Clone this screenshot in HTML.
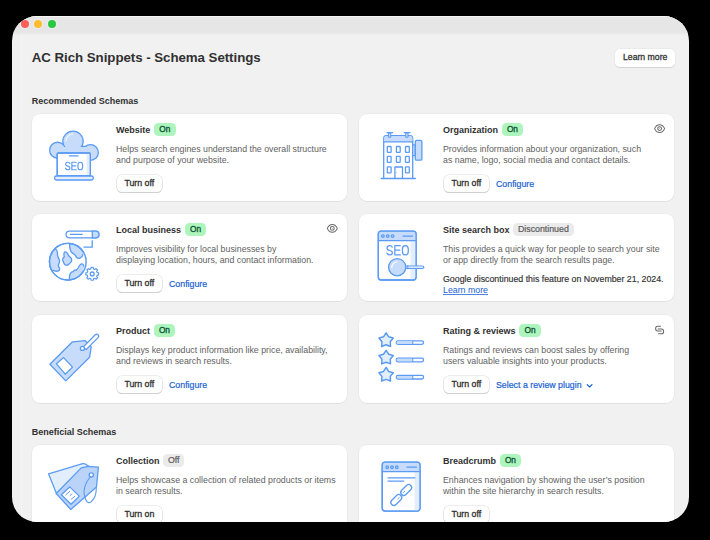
<!DOCTYPE html>
<html><head><meta charset="utf-8">
<style>
*{margin:0;padding:0;box-sizing:border-box}
html,body{width:710px;height:540px;background:#000;overflow:hidden;font-family:"Liberation Sans",sans-serif}
.win{position:absolute;left:12.4px;top:15.8px;width:676.6px;height:506.4px;border-radius:25px;background:#f1f1f1;overflow:hidden}
.bar{position:absolute;left:0;top:0;width:100%;height:19.4px;background:linear-gradient(#e6e6e6 0,#e6e6e6 16.4px,#f1f1f1 19.4px);box-shadow:inset 0 .9px 0 rgba(255,255,255,.65)}
.dot{position:absolute;top:4.4px;width:8.2px;height:8.2px;border-radius:50%;box-shadow:0 0 0 1.2px rgba(245,248,255,.35)}
.abs{position:absolute}
.pg{position:absolute;left:-12.4px;top:-15.8px;width:710px;height:540px}
h1{position:absolute;left:31.8px;top:50.3px;font-size:13.3px;font-weight:bold;color:#303030;letter-spacing:-0.05px;white-space:nowrap}
.sec{position:absolute;font-size:9px;font-weight:bold;color:#303030;white-space:nowrap}
.lm{position:absolute;left:615px;top:49px;width:60px;height:17.5px;background:#fff;border-radius:5px;box-shadow:0 0 0 .5px #e3e3e3,0 1px .5px #c4c4c4;font-size:8.7px;font-weight:normal;-webkit-text-stroke:.3px #333;color:#333;text-align:center;line-height:17.8px;padding-left:.4px}
.card{position:absolute;width:315px;height:86.9px;background:#fff;border-radius:8px;box-shadow:0 0 0 .6px rgba(0,0,0,.05),0 .7px .3px rgba(0,0,0,.06)}
.t{position:absolute;left:84px;top:10.5px;font-size:9px;font-weight:bold;color:#303030;white-space:nowrap}
.badge{display:inline-block;vertical-align:top;margin-left:3.5px;margin-top:-1.4px;height:12.9px;padding:0 5.4px;border-radius:4.5px;background:#adf5bd;color:#0c5132;font-weight:normal;font-size:8.3px;line-height:13.3px;-webkit-text-stroke:.3px #0c5132}
.badge.off{background:#ebebeb;color:#5a5a5a;font-size:8.8px;-webkit-text-stroke:.2px #5a5a5a;padding:0 4.9px;margin-top:-1.9px;line-height:13.1px}
.d{position:absolute;left:84px;top:30.2px;font-size:8.8px;line-height:10.9px;color:#616161;white-space:nowrap}
.btn{position:absolute;left:84.6px;top:60.8px;height:17.4px;padding:0 7.8px;background:#fff;border-radius:5px;box-shadow:0 0 0 .5px #dcdcdc,0 .8px 0 .3px #c6c6c6;font-size:8.8px;font-weight:normal;-webkit-text-stroke:.3px #303030;color:#303030;line-height:17.4px;white-space:nowrap}
.lnk{position:absolute;top:61px;line-height:18.6px;font-size:8.8px;color:#1a5fd2;-webkit-text-stroke:.2px #1a5fd2;white-space:nowrap}
.ov{position:absolute;left:0;top:0}
</style></head><body>
<div class="win">
  <div class="bar"></div>
  <div class="dot" style="left:8.6px;background:#fe5f57"></div>
  <div class="dot" style="left:21.9px;background:#febc2e"></div>
  <div class="dot" style="left:35.2px;background:#28c840"></div>
<div class="pg">
<div class="abs" style="left:20.6px;top:35px;width:.9px;height:487px;background:#f4f4f8"></div>
<h1>AC Rich Snippets - Schema Settings</h1>
<div class="lm">Learn more</div>
<div class="sec" style="left:31.8px;top:96px">Recommended Schemas</div>

<!-- Row 1 -->
<div class="card" style="left:32px;top:114px">
  <div class="t">Website<span class="badge">On</span></div>
  <div class="d">Helps search engines understand the overall structure<br>and purpose of your website.</div>
  <div class="btn">Turn off</div>
</div>
<div class="card" style="left:359px;top:114px">
  <div class="t">Organization<span class="badge">On</span></div>
  <div class="d">Provides information about your organization, such<br>as name, logo, social media and contact details.</div>
  <div class="btn">Turn off</div>
  <div class="lnk" style="left:137px">Configure</div>
</div>

<!-- Row 2 -->
<div class="card" style="left:32px;top:214px">
  <div class="t">Local business<span class="badge">On</span></div>
  <div class="d">Improves visibility for local businesses by<br>displaying location, hours, and contact information.</div>
  <div class="btn">Turn off</div>
  <div class="lnk" style="left:137px">Configure</div>
</div>
<div class="card" style="left:359px;top:214px">
  <div class="t">Site search box<span class="badge off">Discontinued</span></div>
  <div class="d">This provides a quick way for people to search your site<br>or app directly from the search results page.</div>
  <div class="d" style="top:59.9px;line-height:10.8px;color:#303030;-webkit-text-stroke:.15px #303030">Google discontinued this feature on November 21, 2024.<br><span style="color:#1a5fd2;-webkit-text-stroke:0;text-decoration:underline;text-decoration-thickness:.6px;text-underline-offset:.6px;text-decoration-color:#4d86df">Learn more</span></div>
</div>

<!-- Row 3 -->
<div class="card" style="left:32px;top:315.2px;height:87.6px">
  <div class="t">Product<span class="badge">On</span></div>
  <div class="d">Displays key product information like price, availability,<br>and reviews in search results.</div>
  <div class="btn">Turn off</div>
  <div class="lnk" style="left:137px">Configure</div>
</div>
<div class="card" style="left:359px;top:315.2px;height:87.6px">
  <div class="t">Rating &amp; reviews<span class="badge">On</span></div>
  <div class="d">Ratings and reviews can boost sales by offering<br>users valuable insights into your products.</div>
  <div class="btn">Turn off</div>
  <div class="lnk" style="left:137px">Select a review plugin</div>
</div>

<div class="sec" style="left:31.8px;top:427px">Beneficial Schemas</div>

<!-- Row 4 -->
<div class="card" style="left:32px;top:445px">
  <div class="t">Collection<span class="badge off">Off</span></div>
  <div class="d">Helps showcase a collection of related products or items<br>in search results.</div>
  <div class="btn">Turn on</div>
</div>
<div class="card" style="left:359px;top:445px">
  <div class="t">Breadcrumb<span class="badge">On</span></div>
  <div class="d">Enhances navigation by showing the user’s position<br>within the site hierarchy in search results.</div>
  <div class="btn">Turn off</div>
</div>

<svg class="ov" width="710" height="540" viewBox="0 0 710 540">
<g fill="none" stroke="#5b9bf4" stroke-width="1.3" stroke-linejoin="round" stroke-linecap="round">
 <!-- Website cloud SEO -->
 <g>
  <g stroke-width="2.6">
   <circle cx="57.6" cy="150.2" r="7.3"/>
   <circle cx="73" cy="141.3" r="9.5"/>
   <circle cx="90.5" cy="152.5" r="7.2"/>
   <rect x="57.6" y="147" width="32.9" height="11"/>
  </g>
  <g fill="#c6dcfa" stroke="none">
   <circle cx="57.6" cy="150.2" r="7.3"/>
   <circle cx="73" cy="141.3" r="9.5"/>
   <circle cx="90.5" cy="152.5" r="7.2"/>
   <rect x="57.6" y="147" width="32.9" height="11"/>
  </g>
  <path d="M65.9 140.8 A7.2 7.2 0 0 1 72.6 134.2" stroke="#eef5fe" stroke-width="1.2"/>
  <rect x="57.2" y="153" width="33.1" height="23" rx="1.2" fill="#fff"/>
  <rect x="86.6" y="153.7" width="3" height="21.6" fill="#e3eefd" stroke="none"/>
  <rect x="57.2" y="153" width="33.1" height="23" rx="1.2"/>
  <line x1="69.4" y1="155.8" x2="78.1" y2="155.8"/>
  <path d="M69.81 163.40 C69.35 162.35 68.56 162.20 67.72 162.20 C66.42 162.20 65.63 163.10 65.63 164.22 C65.63 165.65 66.70 165.88 67.72 166.10 C68.93 166.36 69.90 166.70 69.90 167.90 C69.90 169.10 69.02 169.70 67.72 169.70 C66.70 169.70 65.86 169.17 65.49 168.20 M76.18 162.20 L71.86 162.20 L71.86 169.70 L76.28 169.70 M71.86 165.80 L75.86 165.80 M80.28 162.20 C81.86 162.20 82.60 163.25 82.60 164.75 L82.60 167.15 C82.60 168.65 81.86 169.70 80.28 169.70 C78.70 169.70 77.96 168.65 77.96 167.15 L77.96 164.75 C77.96 163.25 78.70 162.20 80.28 162.20 Z" stroke-width="1.15"/>
  <rect x="54.6" y="176" width="38.7" height="4" rx="1.8" fill="#e3eefd"/>
 </g>
 <!-- Organization building -->
 <g>
  <path d="M383.7 178.5 L383.7 138.5 Q383.7 135.7 386.5 135.7 L409.9 135.7 Q412.7 135.7 412.7 138.5 L412.7 178.5" fill="#fff"/>
  <path d="M383.9 141.8 L383.9 138.5 Q383.9 135.9 386.5 135.9 L409.9 135.9 Q412.5 135.9 412.5 138.5 L412.5 141.8 Z" fill="#c6dcfa" stroke="none"/>
  <line x1="383.7" y1="141.8" x2="412.7" y2="141.8"/>
  <line x1="381.1" y1="178.5" x2="415.4" y2="178.5"/>
  <path d="M386.9 132.7 L392.7 132.7 M404.2 132.7 L410 132.7"/>
  <rect x="388.8" y="133.2" width="2" height="4" fill="#c6dcfa" stroke-width="1"/>
  <rect x="406.1" y="133.2" width="2" height="4" fill="#c6dcfa" stroke-width="1"/>
  <rect x="387.3" y="146.5" width="3.8" height="5.9" rx=".6"/>
  <rect x="396.4" y="146.5" width="3.8" height="5.9" rx=".6"/>
  <rect x="405.5" y="146.5" width="3.8" height="5.9" rx=".6"/>
  <rect x="387.3" y="156.3" width="3.8" height="6.1" rx=".6"/>
  <rect x="396.4" y="156.3" width="3.8" height="6.1" rx=".6"/>
  <rect x="405.5" y="156.3" width="3.8" height="6.1" rx=".6"/>
  <rect x="387.3" y="166.9" width="3.8" height="5.9" rx=".6"/>
  <rect x="405.5" y="166.9" width="3.8" height="5.9" rx=".6"/>
  <path d="M394.9 178.5 L394.9 167 L402.5 167 L402.5 178.5"/>
  <circle cx="396.6" cy="172.5" r=".4" fill="#5b9bf4" stroke="none"/>
  <rect x="412.7" y="144.9" width="2.5" height="10.7" fill="#e3eefd"/>
  <rect x="415.3" y="140.4" width="6.6" height="19.8" rx="1.3" fill="#c6dcfa"/>
 </g>
 <!-- Local business globe -->
 <g>
  <circle cx="67.8" cy="261.7" r="18.3" fill="#fff"/>
  <path d="M55 248.5 Q57.6 250.2 57.5 253.2 Q57.3 256.2 58.8 258.6 Q60.3 261.2 58.9 263.6 Q57.8 265.8 59.3 267.8 Q60.4 270.3 57.8 271.1 Q55.6 271.6 51.6 270.2 A18.3 18.3 0 0 1 55 248.5 Z" fill="#c6dcfa"/>
  <path d="M64.5 252 Q66.8 251.3 67.8 254 Q68.4 256.3 70.4 257.3 Q72.4 259.3 71.3 261.6 Q69.8 263.6 68.4 264.6 Q66.4 265.8 64.6 264.4 Q63.4 262.2 62.6 260.2 Q62.5 257.7 64.3 256.8 Q63.4 254 64.5 252 Z" fill="#c6dcfa"/>
  <path d="M69.5 243.5 A18.3 18.3 0 0 1 83.6 252.5 Q82.8 256.5 80.6 257.8 Q78.2 259 76.6 257.6 Q75.6 255.2 73.6 253.8 Q71.1 252.6 70.4 250.2 Q69.5 247.2 69.5 243.5 Z" fill="#c6dcfa"/>
  <path d="M84.8 268 A18.3 18.3 0 0 1 69.4 279.9 Q69.2 276.2 70.2 273.6 Q71.8 271.3 73.3 271.6 Q74.6 269.2 76.2 270.3 Q78.6 268.2 79.4 265.6 Q81.6 263 83 264.3 Q84.2 265.8 84.8 268 Z" fill="#c6dcfa"/>
  <path d="M83.6 253 A18.3 18.3 0 0 1 83.8 270.2" stroke="#e3eefd" stroke-width="2.2"/>
  <circle cx="67.8" cy="261.7" r="18.3"/>
  <rect x="66.1" y="231.1" width="32.8" height="6.7" rx="3.35" fill="#fff"/>
  <path d="M92.3 231.1 L95.6 231.1 A3.35 3.35 0 0 1 95.6 237.8 L92.3 237.8 Z" fill="#c6dcfa"/>
  <line x1="70.3" y1="234.4" x2="82.2" y2="234.4"/>
  <path d="M92.2 240.7 L92.2 247.2 L84 247.2"/>
  <g transform="translate(92.2 273.9)">
   <path d="M-1.1 -6 L1.1 -6 L1.5 -4.4 L2.9 -3.7 L4.3 -4.7 L5.8 -3.2 L4.8 -1.8 L5.4 -0.4 L6.9 0 L6.9 2.1 L5.4 2.5 L4.8 3.9 L5.8 5.3 L4.3 6.8 L2.9 5.8 L1.5 6.4 L1.1 8 L-1.1 8 L-1.5 6.4 L-2.9 5.8 L-4.3 6.8 L-5.8 5.3 L-4.8 3.9 L-5.4 2.5 L-6.9 2.1 L-6.9 0 L-5.4 -0.4 L-4.8 -1.8 L-5.8 -3.2 L-4.3 -4.7 L-2.9 -3.7 L-1.5 -4.4 Z" transform="translate(0 -1) scale(.92)" fill="#fff"/>
   <circle cx="0" cy="0" r="1.9"/>
  </g>
 </g>
 <!-- Site search box -->
 <g>
  <rect x="378.3" y="231.1" width="37.8" height="48.9" rx="3" fill="#fff"/>
  <path d="M378.6 240.6 L378.6 234 Q378.6 231.4 381.2 231.4 L413.2 231.4 Q415.8 231.4 415.8 234 L415.8 240.6 Z" fill="#c6dcfa" stroke="none"/>
  <rect x="410.5" y="241" width="5.2" height="38.6" fill="#e3eefd" stroke="none"/>
  <rect x="378.3" y="231.1" width="37.8" height="48.9" rx="3"/>
  <line x1="378.3" y1="240.6" x2="416.1" y2="240.6"/>
  <circle cx="382.9" cy="236.1" r="1.3"/>
  <circle cx="387.7" cy="236.1" r="1.3"/>
  <circle cx="392.6" cy="236.1" r="1.3"/>
  <line x1="403" y1="236.1" x2="412.5" y2="236.1"/>
  <path d="M392.26 247.14 C391.68 245.84 390.70 245.65 389.65 245.65 C388.03 245.65 387.04 246.77 387.04 248.16 C387.04 249.93 388.38 250.21 389.65 250.49 C391.16 250.81 392.38 251.23 392.38 252.72 C392.38 254.21 391.28 254.95 389.65 254.95 C388.38 254.95 387.33 254.30 386.87 253.09 M400.23 245.65 L394.83 245.65 L394.83 254.95 L400.34 254.95 M394.83 250.11 L399.82 250.11 M405.35 245.65 C407.32 245.65 408.25 246.95 408.25 248.81 L408.25 251.79 C408.25 253.65 407.32 254.95 405.35 254.95 C403.37 254.95 402.44 253.65 402.44 251.79 L402.44 248.81 C402.44 246.95 403.37 245.65 405.35 245.65 Z" stroke-width="1.25"/>
  <line x1="406.5" y1="267.2" x2="422.5" y2="267.2" stroke-width="3.6"/>
  <line x1="406.5" y1="267.2" x2="422.5" y2="267.2" stroke="#fff" stroke-width="1.2"/>
  <line x1="407.8" y1="265.5" x2="407.8" y2="268.9" stroke-width="1"/>
  <circle cx="397.2" cy="267.2" r="8.6" fill="#c6dcfa"/>
  <path d="M391.8 268 A5.6 5.6 0 0 1 397 261.8" stroke="#fff" stroke-width="1.1"/>
 </g>
 <!-- Product tag -->
 <g>
  <path d="M49.9 364.3 L65.8 380.9 L89.6 357.2 L91.2 346.8 L85.3 340.7 L72.5 341.8 Z" fill="#c6dcfa"/>
  <path d="M56.4 363.8 L63.6 357.6 L72.5 367.1 L65.3 374.2 Z" fill="#fff"/>
  <path d="M83.3 346.9 L95.3 334.8 A1.9 1.9 0 0 1 98.1 337.6 L86.1 349.6 Z" fill="#fff"/>
  <circle cx="82.4" cy="348.4" r="2" fill="#fff"/>
 </g>
 <!-- Rating stars -->
 <g>
  <g id="st">
   <path d="M386.10 332.90 L388.69 336.84 L393.23 338.08 L390.28 341.76 L390.51 346.47 L386.10 344.80 L381.69 346.47 L381.92 341.76 L378.97 338.08 L383.51 336.84 Z" fill="#e3eefd" stroke-width="1.5"/>
   <rect x="396.2" y="340.8" width="27.4" height="3.6" rx="1.8" fill="#fff"/>
   <path d="M397.9 341.3 L412.6 341.3 L412.6 343.9 L397.9 343.9 A1.3 1.3 0 0 1 397.9 341.3 Z" fill="#c6dcfa" stroke="none"/>
   <line x1="412.8" y1="341" x2="412.8" y2="344.2" stroke-width="1"/>
  </g>
  <use href="#st" transform="translate(0 17.4)"/>
  <use href="#st" transform="translate(0 34.6)"/>
 </g>
 <!-- Collection tags -->
 <g>
  <path d="M48.6 473.9 L82.7 463.7 Q84.4 463.3 85.7 464.2 L89.8 467 L56.5 493.5 Z" fill="#e3eefd"/>
  <path d="M56.2 493.5 L70.8 509.5 L96.5 487 L98.4 467.2 L88.2 466.3 L81.2 467.9 Z" fill="#b9d3f9"/>
  <path d="M61.3 494.7 L69.7 486.9 L79.3 496.1 L71.1 504.3 Z" fill="#fff"/>
  <path d="M65.9 494.7 L69.7 491.4 M70 495.6 L71.9 493.9 M71.1 499.4 L74.7 496.4" stroke-width="1"/>
  <circle cx="91.3" cy="475" r="2.1" fill="#fff"/>
  <path d="M90.5 476.5 Q82 487 84.6 496.5 Q86.8 504.5 90.8 502 Q96.5 497.8 96.3 487.5" stroke-width="1.1"/>
 </g>
 <!-- Breadcrumb -->
 <g>
  <rect x="382.2" y="462.2" width="37.8" height="48.9" rx="3" fill="#fff"/>
  <path d="M382.5 471.7 L382.5 465.1 Q382.5 462.5 385.1 462.5 L417.1 462.5 Q419.7 462.5 419.7 465.1 L419.7 471.7 Z" fill="#c6dcfa" stroke="none"/>
  <rect x="414.6" y="472" width="5.1" height="38.8" fill="#e3eefd" stroke="none"/>
  <rect x="382.2" y="462.2" width="37.8" height="48.9" rx="3"/>
  <line x1="382.2" y1="471.7" x2="420" y2="471.7"/>
  <circle cx="387.2" cy="467.2" r="1.3"/>
  <circle cx="392" cy="467.2" r="1.3"/>
  <circle cx="396.8" cy="467.2" r="1.3"/>
  <line x1="407" y1="467.2" x2="416.5" y2="467.2"/>
  <line x1="388" y1="477.8" x2="414.9" y2="477.8"/>
  <line x1="388" y1="481.1" x2="403.8" y2="481.1"/>
  <rect x="399.75" y="487" width="12.9" height="6" rx="3" transform="rotate(-45 406.2 490)"/>
  <rect x="389.85" y="497" width="12.9" height="6" rx="3" transform="rotate(-45 396.3 500)"/>
  <path d="M403.3 492.6 L404.6 491.3 M397.9 498.8 L399.2 497.5" stroke-width="1"/>
 </g>
</g>
<!-- grey icons -->
<g fill="none" stroke="#6a6a6a" stroke-width="1.05" stroke-linecap="round" stroke-linejoin="round">
 <path d="M654.6 128.6 C656.0 125.19999999999999 657.8000000000001 124.69999999999999 659.6 124.69999999999999 C661.4 124.69999999999999 663.2 125.19999999999999 664.6 128.6 C663.2 132.0 661.4 132.5 659.6 132.5 C657.8000000000001 132.5 656.0 132.0 654.6 128.6 Z"/>
 <circle cx="659.6" cy="128.6" r="1.9"/>
 <circle cx="659.6" cy="128.6" r=".45" fill="#6a6a6a" stroke="none"/>
 <path d="M327.3 228.4 C328.7 225.0 330.5 224.5 332.3 224.5 C334.1 224.5 335.90000000000003 225.0 337.3 228.4 C335.90000000000003 231.8 334.1 232.3 332.3 232.3 C330.5 232.3 328.7 231.8 327.3 228.4 Z"/>
 <circle cx="332.3" cy="228.4" r="1.9"/>
 <circle cx="332.3" cy="228.4" r=".45" fill="#6a6a6a" stroke="none"/>
 <path d="M660.5 326.2 L657.6 326.2 Q655.6 326.2 655.6 328.6 Q655.6 331 657.6 331 L661.2 331"/>
 <path d="M658.6 333.8 L661.6 333.8 Q663.6 333.8 663.6 331.4 Q663.6 329 661.6 329 L658 329"/>
</g>
<path d="M587.2 384.6 L589.6 387 L592 384.6" fill="none" stroke="#005bd3" stroke-width="1.1" stroke-linecap="round" stroke-linejoin="round"/>
</svg>
</div>
</div>
</body></html>
